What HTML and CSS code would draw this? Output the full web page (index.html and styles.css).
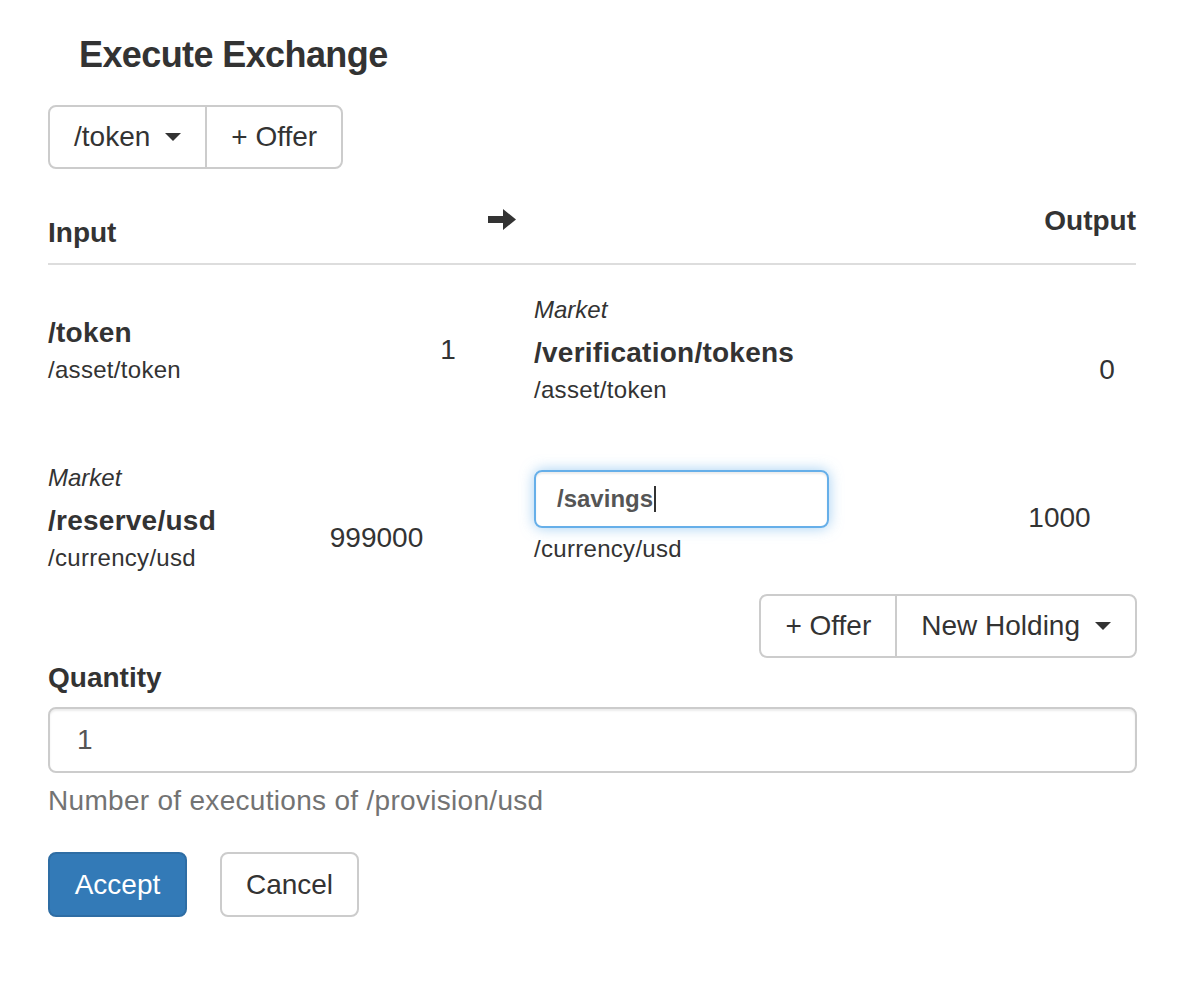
FILE: index.html
```html
<!DOCTYPE html>
<html>
<head>
<meta charset="utf-8">
<link rel="stylesheet" href="styles.css">
</head>
<body>
<div class="page">
  <h4 class="title">Execute Exchange</h4>

  <div class="btn-group">
    <button class="btn">/token<span class="caret"></span></button>
    <button class="btn">+ Offer</button>
  </div>

  <div class="thead">
    <div class="th th-input">Input</div>
    <div class="th-arrow">
      <svg width="28" height="21" viewBox="0 0 28 21"><path d="M0 7h15V0l13 10.5L15 21v-7H0z" fill="#333"/></svg>
    </div>
    <div class="th th-output">Output</div>
  </div>

  <div class="row row-first">
    <div class="side side-in">
      <div class="inner">
        <div class="ident ident-in1">
          <div class="name">/token</div>
          <div class="type">/asset/token</div>
        </div>
        <div class="num">1</div>
      </div>
    </div>
    <div class="side side-out">
      <div class="market">Market</div>
      <div class="inner">
        <div class="ident ident-out1">
          <div class="name">/verification/tokens</div>
          <div class="type">/asset/token</div>
        </div>
        <div class="num">0</div>
      </div>
    </div>
  </div>

  <div class="row row-second">
    <div class="side side-in">
      <div class="market">Market</div>
      <div class="inner">
        <div class="ident ident-in2">
          <div class="name">/reserve/usd</div>
          <div class="type">/currency/usd</div>
        </div>
        <div class="num">999000</div>
      </div>
    </div>
    <div class="side side-out">
      <div class="inner">
        <div class="ident ident-out2">
          <div class="field">/savings<span class="text-caret"></span></div>
          <div class="type type-under-field">/currency/usd</div>
        </div>
        <div class="num">1000</div>
      </div>
    </div>
  </div>

  <div class="add-row">
    <div class="btn-group">
      <button class="btn">+ Offer</button>
      <button class="btn">New Holding<span class="caret"></span></button>
    </div>
  </div>

  <div class="form-group">
    <label class="label" for="qty">Quantity</label>
    <input id="qty" class="form-control" type="text" value="1">
    <div class="help">Number of executions of /provision/usd</div>
  </div>

  <div class="footer">
    <button class="btn btn-primary">Accept</button>
    <button class="btn btn-default">Cancel</button>
  </div>
</div>
</body>
</html>
```

FILE: styles.css
```css
* { box-sizing: border-box; }

html, body {
  margin: 0;
  padding: 0;
  background: #fff;
}

body {
  font-family: "Liberation Sans", Arial, Helvetica, sans-serif;
  font-size: 28px;
  line-height: 40px;
  color: #333;
}

.page {
  width: 1186px;
  padding: 35px 50px 40px 48px;
}

.title {
  margin: 0 0 0 31px;
  font-size: 36px;
  line-height: 40px;
  font-weight: bold;
  letter-spacing: -0.6px;
}

.btn-group {
  display: inline-flex;
  margin-top: 30px;
}

.btn {
  font-family: inherit;
  font-size: 28px;
  line-height: 60px;
  height: 64px;
  padding: 0 24px;
  color: #333;
  background: #fff;
  border: 2px solid #ccc;
  border-radius: 8px;
  display: inline-flex;
  align-items: center;
  cursor: pointer;
}

.btn-group .btn + .btn {
  margin-left: -2px;
}

.btn-group .btn:first-child {
  border-top-right-radius: 0;
  border-bottom-right-radius: 0;
}

.btn-group .btn:last-child {
  border-top-left-radius: 0;
  border-bottom-left-radius: 0;
}

.caret {
  display: inline-block;
  width: 0;
  height: 0;
  margin-left: 15px;
  border-top: 8px solid #333;
  border-left: 8px solid transparent;
  border-right: 8px solid transparent;
}

.thead {
  display: flex;
  align-items: flex-start;
  margin-top: 32px;
  padding-bottom: 10px;
  border-bottom: 2px solid #ddd;
}

.th {
  font-weight: bold;
  font-size: 28px;
  line-height: 40px;
}

.th-input {
  width: 440px;
  margin-top: 12px;
}

.th-arrow {
  margin-top: 8px;
  line-height: 0;
}

.th-output {
  flex: 1;
  text-align: right;
}

.row {
  display: flex;
  align-items: center;
}

.row-first {
  margin-top: 28px;
}

.row-second {
  margin-top: 54px;
}

.side {
  display: flex;
  flex-direction: column;
}

.side-in {
  width: 486px;
}

.side-out {
  flex: 1;
}

.inner {
  display: flex;
  align-items: center;
}

.ident-in1 { width: 314px; }
.ident-in2 { width: 171px; }
.ident-out1 { width: 544px; }
.ident-out2 { width: 449px; }

.num {
  flex: 1;
  text-align: center;
  font-size: 28px;
  line-height: 40px;
}

.market {
  font-style: italic;
  font-size: 24px;
  line-height: 34px;
  margin-bottom: 6px;
}

.name {
  font-weight: bold;
  font-size: 28px;
  line-height: 40px;
  letter-spacing: 0.25px;
}

.type {
  font-size: 24px;
  line-height: 34px;
  letter-spacing: 0.3px;
}

.type-under-field {
  margin-top: 4px;
}

.field {
  width: 295px;
  height: 58px;
  padding-left: 21px;
  border: 2px solid #66afe9;
  border-radius: 8px;
  box-shadow: inset 0 2px 2px rgba(0, 0, 0, 0.075), 0 0 14px rgba(102, 175, 233, 0.6);
  font-size: 24px;
  font-weight: bold;
  color: #555;
  display: flex;
  align-items: center;
}

.text-caret {
  display: inline-block;
  width: 1.5px;
  height: 26px;
  background: #333;
  margin-left: 1px;
}

.add-row {
  display: flex;
  justify-content: flex-end;
  margin-right: -1px;
}

.add-row .btn-group {
  margin-top: 19px;
}

.form-group {
  display: flex;
  flex-direction: column;
}

.label {
  font-weight: bold;
  font-size: 28px;
  line-height: 40px;
  margin-top: 0;
  margin-bottom: 9px;
}

.form-control {
  width: 1089px;
  height: 66px;
  padding: 0 27px;
  font-family: inherit;
  font-size: 28px;
  color: #555;
  border: 2px solid #ccc;
  border-radius: 8px;
  box-shadow: inset 0 2px 2px rgba(0, 0, 0, 0.075);
  outline: none;
}

.help {
  margin-top: 8px;
  color: #737373;
  font-size: 28px;
  line-height: 40px;
  letter-spacing: 0.3px;
}

.footer {
  display: flex;
  gap: 33px;
  margin-top: 31px;
}

.footer .btn {
  height: 65px;
  width: 139px;
  justify-content: center;
  padding: 0;
}

.btn-primary {
  color: #fff;
  background: #337ab7;
  border-color: #2e6da4;
}

.btn-default {
  color: #333;
  background: #fff;
  border-color: #ccc;
}
```
